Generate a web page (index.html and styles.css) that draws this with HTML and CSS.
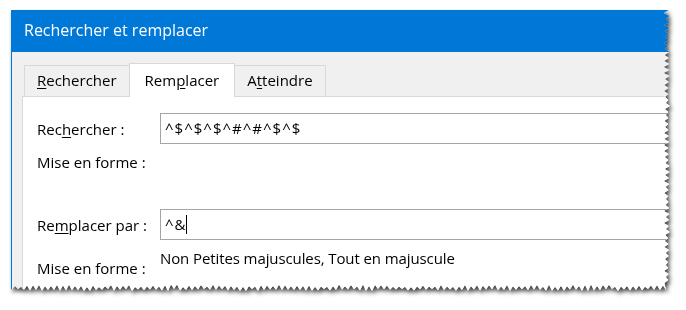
FILE: index.html
```html
<!DOCTYPE html>
<html lang="fr">
<head>
  <meta charset="UTF-8" />
  <meta name="viewport" content="width=device-width, initial-scale=1.0" />
  <title>Rechercher et remplacer</title>
  <link rel="stylesheet" href="styles.css">
</head>
<body>
  <div class="frame">
    <div class="dialog" id="dialog">
      <div class="titlebar">Rechercher et remplacer</div>

      <div class="dialog-body">
        <div class="tabs">
          <div class="tab"><u>R</u>echercher</div>
          <div class="tab active">Rem<u>p</u>lacer</div>
          <div class="tab">A<u>t</u>teindre</div>
        </div>

        <div class="panel">
          <div class="row">
            <span class="label">Rec<u>h</u>ercher :</span>
            <div class="field field-find">^$^$^$^#^#^$^$</div>
          </div>
          <div class="row format">
            <span class="label">Mise en forme :</span>
          </div>

          <div class="row replace">
            <span class="label">Re<u>m</u>placer par :</span>
            <div class="field field-find">^&amp;<span class="caret"></span></div>
          </div>
          <div class="row format format-replace">
            <span class="label">Mise en forme :</span>
            <span class="format-value">Non Petites majuscules, Tout en majuscule</span>
          </div>
        </div>
      </div>
    </div>
  </div>

  <script src="script.js"></script>
</body>
</html>
```

FILE: styles.css
```css
* {
    margin: 0;
    padding: 0;
    box-sizing: border-box;
}

body {
    font-family: "Open Sans", "Noto Sans", sans-serif;
    background: #ffffff;
    color: #000000;
    width: 686px;
    height: 310px;
    overflow: hidden;
}

.frame {
    padding: 10px 0 0 11px;
    filter: drop-shadow(2px 3px 2px rgba(0, 0, 0, 0.75));
}

.dialog {
    width: 661px;
    height: 284px;
    background: #f0f0f0;
    border-left: 1px solid #0078d7;
    overflow: hidden;
}

.titlebar {
    height: 42px;
    line-height: 41px;
    padding-left: 12px;
    background: #0078d7;
    color: #ffffff;
    font-size: 16px;
}

.dialog-body {
    padding: 11px 0 0 10px;
}

.tabs {
    display: flex;
    align-items: flex-end;
    margin-left: 2px;
}

.tab {
    height: 31px;
    line-height: 29px;
    padding: 0 12px;
    font-size: 15px;
    background: #f0f0f0;
    border: 1px solid #d9d9d9;
    border-bottom: none;
}

.tab + .tab {
    margin-left: -1px;
}

.tab.active {
    height: 34px;
    padding: 2px 15px 0;
    margin-bottom: -1px;
    background: #ffffff;
    position: relative;
    z-index: 1;
}

.tab u,
.label u {
    text-underline-offset: 2px;
}

.panel {
    height: 220px;
    background: #ffffff;
    border: 1px solid #d9d9d9;
    border-right: none;
    padding: 16px 0 0 14px;
    font-size: 15px;
}

.row {
    display: grid;
    grid-template-columns: 123px 1fr;
    align-items: center;
}

.label {
    white-space: nowrap;
}

.field {
    height: 31px;
    line-height: 29px;
    padding-left: 4px;
    border: 1px solid #a5a5a5;
    border-right: none;
    white-space: nowrap;
}

.field-find {
    letter-spacing: 1px;
}

.caret {
    display: inline-block;
    width: 1px;
    height: 19px;
    background: #000000;
    vertical-align: middle;
    margin-left: -1px;
    margin-top: -3px;
}

.format {
    margin-top: 8px;
    line-height: 20px;
}

.replace {
    margin-top: 37px;
}

.format-replace {
    align-items: start;
}

.format-replace .label {
    margin-top: 10px;
}

.format-value {
    white-space: nowrap;
    letter-spacing: -0.1px;
}
```

FILE: script.js
```js
// torn paper edge on the right and bottom of the dialog
(function () {
  var el = document.getElementById("dialog");
  var w = el.offsetWidth;
  var h = el.offsetHeight;
  var seed = 11;

  function rnd() {
    seed = (seed * 9301 + 49297) % 233280;
    return seed / 233280;
  }

  var pts = ["0px 0px"];
  var i = 0;
  for (var y = 0; y < h - 8; y += 3) {
    var x = w - (i % 2 ? 6 + rnd() * 2.5 : 2 + rnd() * 2);
    pts.push(x.toFixed(1) + "px " + y + "px");
    i++;
  }
  for (var bx = w - 6; bx > 0; bx -= 3) {
    var by = h - (i % 2 ? 7 + rnd() * 2.5 : 3 + rnd() * 2);
    pts.push(bx + "px " + by.toFixed(1) + "px");
    i++;
  }
  pts.push("0px " + (h - 5) + "px");

  el.style.clipPath = "polygon(" + pts.join(",") + ")";
})();
```
